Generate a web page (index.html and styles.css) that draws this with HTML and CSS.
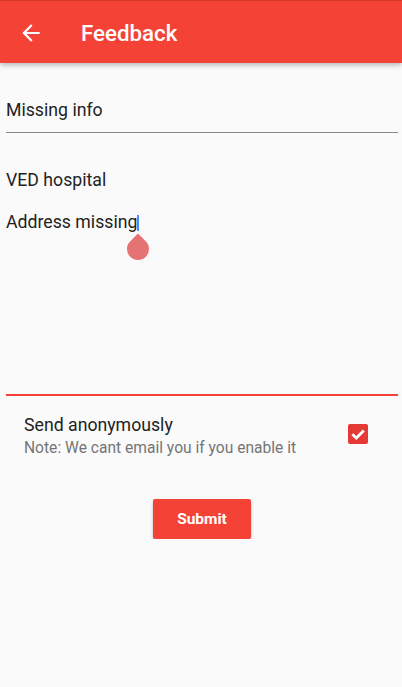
FILE: index.html
```html
<!DOCTYPE html>
<html>
<head>
<meta charset="utf-8">
<link rel="stylesheet" href="styles.css">
</head>
<body>
<header class="appbar">
  <svg class="back" viewBox="0 0 24 24" width="26" height="26"><path fill="#fff" d="M20 11H7.83l5.59-5.59L12 4l-8 8 8 8 1.41-1.41L7.83 13H20v-2z"/></svg>
  <h1 class="title">Feedback</h1>
</header>
<main class="form">
  <div class="field-title">Missing info</div>
  <div class="field-body"><div class="body-text">VED hospital

Address missing<span class="caret"><span class="handle"></span></span></div></div>
  <div class="option-row">
    <div class="option-text">
      <div class="option-label">Send anonymously</div>
      <div class="option-note">Note: We cant email you if you enable it</div>
    </div>
    <div class="checkbox">
      <svg viewBox="0 0 20 20" width="20" height="20"><polyline points="4.3,10.2 8.3,14 15.8,6.4" fill="none" stroke="#fff" stroke-width="2.8"/></svg>
    </div>
  </div>
  <div class="actions">
    <button class="submit">Submit</button>
  </div>
</main>
</body>
</html>
```
FILE: styles.css
```css
html, body {
  margin: 0;
  padding: 0;
  background: #fafafa;
  font-family: Roboto, "Noto Sans", sans-serif;
  color: #222222;
}
.appbar {
  height: 62px;
  border-top: 1px solid #d1392d;
  background: #f44336;
  display: flex;
  align-items: center;
  box-shadow: 0 2px 5px rgba(0,0,0,0.28);
  position: relative;
  z-index: 1;
}
.back {
  margin-left: 18px;
  margin-top: 1px;
}
.title {
  margin: 0 0 0 37px;
  color: #fff;
  font-size: 22.3px;
  font-weight: 500;
  line-height: 24px;
  margin-top: 2px;
}
.form {
  padding: 0 4px 0 6px;
}
.field-title {
  font-size: 17.7px;
  line-height: 20px;
  padding-top: 37px;
  padding-bottom: 12px;
  border-bottom: 1px solid #8a8a8a;
}
.field-body {
  padding-top: 37px;
  height: 224px;
  border-bottom: 2px solid #f44336;
}
.body-text {
  font-size: 17.7px;
  line-height: 20.8px;
  white-space: pre-wrap;
}
.caret {
  display: inline-block;
  position: relative;
  width: 2px;
  height: 16px;
  background: #4c8bf5;
  vertical-align: -3px;
  margin-left: 0;
}
.handle {
  position: absolute;
  left: -10px;
  top: 23px;
  width: 22px;
  height: 22px;
  background: #e57373;
  border-radius: 0 50% 50% 50%;
  transform: rotate(45deg);
}
.option-row {
  display: flex;
  align-items: center;
  justify-content: space-between;
  padding: 19px 30px 0 18px;
}
.option-label {
  font-size: 17.7px;
  line-height: 20px;
}
.option-note {
  font-size: 15.6px;
  line-height: 18px;
  margin-top: 4px;
  color: #757575;
}
.checkbox {
  width: 20px;
  height: 20px;
  background: #e53935;
  border-radius: 2px;
  margin-top: -4px;
}
.checkbox svg {
  display: block;
}
.actions {
  display: flex;
  justify-content: center;
  margin-top: 42px;
}
.submit {
  width: 98px;
  height: 40px;
  border: none;
  border-radius: 2px;
  background: #f44336;
  color: #fff;
  font-family: Roboto, sans-serif;
  font-size: 15.5px;
  font-weight: 700;
  box-shadow: 0 2px 3px rgba(0,0,0,0.28);
  padding: 0;
}
```
